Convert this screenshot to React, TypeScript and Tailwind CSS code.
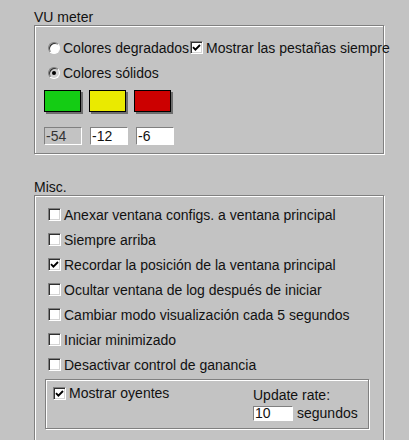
import React from "react";

const etched = "border border-[#808080] shadow-[inset_1px_1px_0_#ffffff,1px_1px_0_#ffffff]";

function Check({ checked }: { checked?: boolean }) {
  return (
    <span className="flex h-[13px] w-[13px] shrink-0 items-center justify-center border border-t-[#808080] border-l-[#808080] border-r-white border-b-white bg-white shadow-[inset_1px_1px_0_#303030,inset_-1px_-1px_0_#d4d4d4]">
      {checked && (
        <svg width="9" height="9" viewBox="0 0 9 9">
          <path d="M1 4.2 L3.4 6.6 L8 2" fill="none" stroke="#000" strokeWidth="1.9" />
        </svg>
      )}
    </span>
  );
}

function Radio({ checked }: { checked?: boolean }) {
  return (
    <span
      className={`flex h-[12px] w-[12px] shrink-0 items-center justify-center rounded-full border border-t-[#808080] border-l-[#808080] border-r-white border-b-white shadow-[inset_1px_1px_0_#303030] ${
        checked ? "bg-[#d0d0d0]" : "bg-white"
      }`}
    >
      {checked && <span className="h-[4px] w-[4px] rounded-full bg-black" />}
    </span>
  );
}

function CheckRow({ label, checked }: { label: string; checked?: boolean }) {
  return (
    <div className="flex h-[25px] items-center gap-[3px] whitespace-nowrap">
      <Check checked={checked} />
      <span>{label}</span>
    </div>
  );
}

function Field({ value, disabled, w = "w-[38px]", h = "h-[18px]" }: { value: string; disabled?: boolean; w?: string; h?: string }) {
  return (
    <div
      className={`flex items-center border border-t-[#808080] border-l-[#808080] border-r-white border-b-white pl-[1px] ${w} ${h} ${
        disabled ? "bg-[#c3c3c3] text-[#333]" : "bg-white"
      }`}
    >
      {value}
    </div>
  );
}

const misc: [string, boolean][] = [
  ["Anexar ventana configs. a ventana principal", false],
  ["Siempre arriba", false],
  ["Recordar la posición de la ventana principal", true],
  ["Ocultar ventana de log después de iniciar", false],
  ["Cambiar modo visualización cada 5 segundos", false],
  ["Iniciar minimizado", false],
  ["Desactivar control de ganancia", false],
];

export default function App() {
  return (
    <div className="h-[440px] w-[409px] overflow-hidden bg-[#c3c3c3] pl-[34px] pt-[9px] text-[14px] leading-[16px] text-[#111] [font-family:'Liberation_Sans',Arial,sans-serif]">
      <div className="h-[16px]">VU meter</div>
      <div className={`${etched} h-[129px] w-[350px] pl-[9px] pt-[9px]`}>
        <div className="ml-[4px] flex h-[25px] items-center whitespace-nowrap">
          <Radio />
          <span className="ml-[3px]">Colores degradados</span>
          <span className="ml-[1px]">
            <Check checked />
          </span>
          <span className="ml-[3px]">Mostrar las pestañas siempre</span>
        </div>
        <div className="ml-[4px] flex h-[25px] items-center gap-[3px]">
          <Radio checked />
          <span>Colores sólidos</span>
        </div>
        <div className="mt-[5px] flex gap-[8px]">
          <div className="h-[22px] w-[37px] border border-black bg-[#14cc14] shadow-[2px_2px_0_#6e6e6e]" />
          <div className="h-[22px] w-[37px] border border-black bg-[#eaea00] shadow-[2px_2px_0_#6e6e6e]" />
          <div className="h-[22px] w-[37px] border border-black bg-[#cc0000] shadow-[2px_2px_0_#6e6e6e]" />
        </div>
        <div className="mt-[15px] flex gap-[8px]">
          <Field value="-54" disabled />
          <Field value="-12" />
          <Field value="-6" />
        </div>
      </div>

      <div className="mt-[25px] h-[16px]">Misc.</div>
      <div className={`${etched} h-[280px] w-[350px] pl-[13px] pt-[6px]`}>
        {misc.map(([label, checked]) => (
          <CheckRow key={label} label={label} checked={checked} />
        ))}
        <div className={`${etched} -ml-[3px] mt-[2px] flex h-[50px] w-[324px] pl-[7px]`}>
          <div className="flex h-[16px] w-[200px] items-center gap-[3px] mt-[5px]">
            <Check checked />
            <span>Mostrar oyentes</span>
          </div>
          <div className="flex flex-col pt-[7px]">
            <span>Update rate:</span>
            <div className="mt-[2px] flex items-center gap-[4px]">
              <Field value="10" w="w-[40px]" h="h-[15px]" />
              <span>segundos</span>
            </div>
          </div>
        </div>
      </div>
    </div>
  );
}
